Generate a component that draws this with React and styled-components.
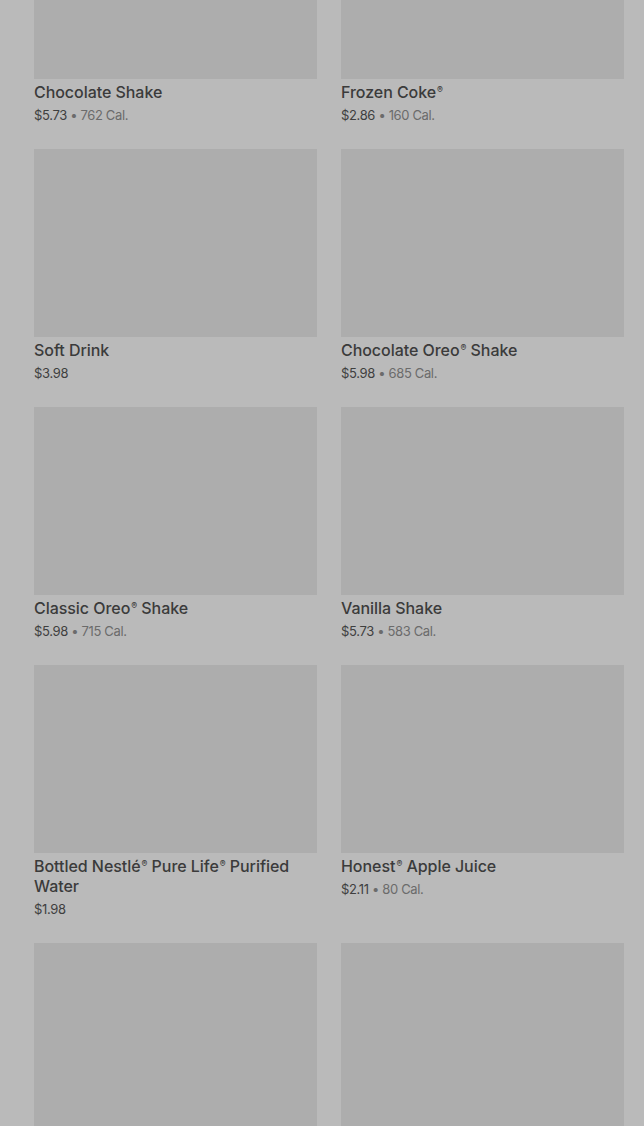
import styled, { createGlobalStyle } from 'styled-components'

const GlobalStyle = createGlobalStyle`
html, body {
    margin: 0;
    padding: 0;
    background: #bababa;
    overflow: hidden;
}
body {
    font-family: Inter, "Noto Sans", sans-serif;
}
`;

const Page = styled.div`
width: 644px;
height: 1126px;
overflow: hidden;
background: #bababa;
`;

const Grid = styled.div`
display: grid;
grid-template-columns: 283px 283px;
column-gap: 24px;
row-gap: 24px;
padding: 0 20px 0 34px;
margin-top: -109px;
`;

const Card = styled.div`
display: flex;
flex-direction: column;
`;

const Picture = styled.div`
width: 100%;
height: 188px;
background: #adadad;
`;

const Title = styled.div`
margin-top: 3px;
font-size: 16px;
line-height: 20px;
font-weight: 500;
color: #3b3b3b;
letter-spacing: -0.05px;
`;

const Word = styled.span`
white-space: nowrap;
`;

const Reg = styled.sup`
font-size: 0.55em;
line-height: 0;
vertical-align: 0.55em;
margin-left: 1px;
`;

const Meta = styled.div`
margin-top: 3px;
font-size: 13px;
line-height: 20px;
color: #3f3f3f;
letter-spacing: -0.35px;
& span{
    color: #6b6b6b;
}
`;

const items = [
    { name: 'Chocolate Shake', price: '$5.73', cal: '762 Cal.' },
    { name: 'Frozen Coke®', price: '$2.86', cal: '160 Cal.' },
    { name: 'Soft Drink', price: '$3.98' },
    { name: 'Chocolate Oreo® Shake', price: '$5.98', cal: '685 Cal.' },
    { name: 'Classic Oreo® Shake', price: '$5.98', cal: '715 Cal.' },
    { name: 'Vanilla Shake', price: '$5.73', cal: '583 Cal.' },
    { name: 'Bottled Nestlé® Pure Life® Purified Water', price: '$1.98' },
    { name: 'Honest® Apple Juice', price: '$2.11', cal: '80 Cal.' },
    { name: '', price: '' },
    { name: '', price: '' },
]

const renderName = (name) => {
    if (!name) return null
    const words = name.split(' ')
    return words.map((w, i) => {
        const reg = w.endsWith('®')
        return [
            <Word key={i}>
                {reg ? w.slice(0, -1) : w}
                {reg && <Reg>®</Reg>}
            </Word>,
            i < words.length - 1 ? ' ' : null,
        ]
    })
}

const Item = ({ item }) => (
    <Card>
        <Picture />
        <Title>{renderName(item.name)}</Title>
        <Meta>
            {item.price}
            {item.cal && <span> • {item.cal}</span>}
        </Meta>
    </Card>
)

export default function App() {
    return (
        <Page>
            <GlobalStyle />
            <Grid>
                {items.map((item, i) => <Item key={i} item={item} />)}
            </Grid>
        </Page>
    )
}
